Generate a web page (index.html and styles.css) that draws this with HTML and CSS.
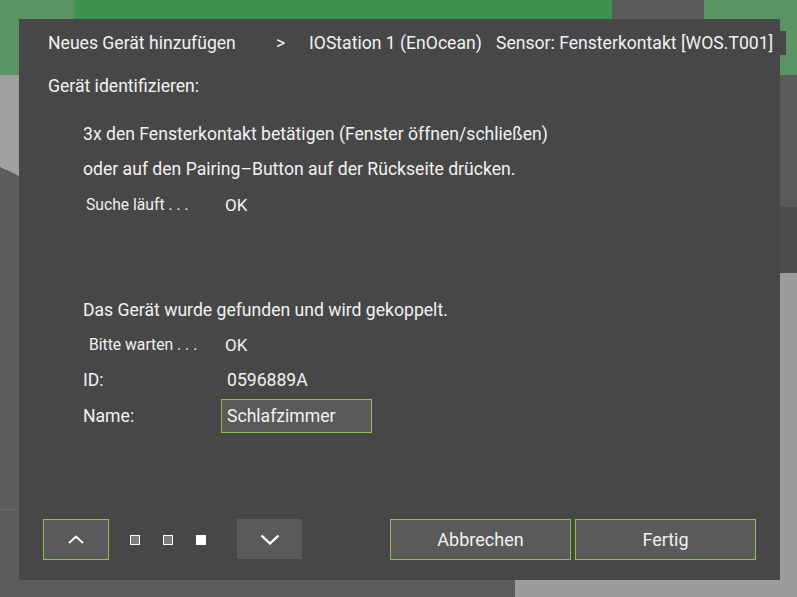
FILE: index.html
```html
<!DOCTYPE html>
<html lang="de">
<head>
<meta charset="utf-8">
<title>Neues Gerät hinzufügen</title>
<link rel="stylesheet" href="styles.css">
</head>
<body>
<div class="screen">
  <div class="dialog">
    <div class="crumbs">
      <span class="crumb crumb-first">Neues Gerät hinzufügen</span>
      <span class="crumb crumb-sep">&gt;</span>
      <span class="crumb crumb-mid">IOStation 1 (EnOcean)</span>
      <span class="crumb crumb-last">Sensor: Fensterkontakt [WOS.T001]</span>
    </div>
    <div class="title">Gerät identifizieren:</div>
    <div class="content">
      <div class="line">3x den Fensterkontakt betätigen (Fenster öffnen/schließen)</div>
      <div class="line">oder auf den Pairing–Button auf der Rückseite drücken.</div>
      <div class="row row-status">
        <span class="label small indent-a">Suche läuft . . .</span>
        <span class="value value-ok">OK</span>
      </div>
      <div class="line line-found">Das Gerät wurde gefunden und wird gekoppelt.</div>
      <div class="row row-status">
        <span class="label small indent-b">Bitte warten . . .</span>
        <span class="value value-ok">OK</span>
      </div>
      <div class="row">
        <span class="label">ID:</span>
        <span class="value value-id">0596889A</span>
      </div>
      <div class="row row-name">
        <span class="label">Name:</span>
        <span class="input">Schlafzimmer</span>
      </div>
    </div>
    <div class="footer">
      <button class="btn btn-nav btn-up" type="button" aria-label="Zurück">
        <svg width="16" height="9" viewBox="0 0 16 9"><polyline points="1,8 8,1.5 15,8" fill="none" stroke="#ffffff" stroke-width="2"/></svg>
      </button>
      <div class="dots">
        <span class="dot"></span>
        <span class="dot"></span>
        <span class="dot dot-active"></span>
      </div>
      <button class="btn btn-nav btn-down" type="button" aria-label="Weiter">
        <svg width="20" height="11" viewBox="0 0 20 11"><polyline points="1.5,1.5 10,9.5 18.5,1.5" fill="none" stroke="#ffffff" stroke-width="2.4"/></svg>
      </button>
      <div class="actions">
        <button class="btn btn-action" type="button">Abbrechen</button>
        <button class="btn btn-action" type="button">Fertig</button>
      </div>
    </div>
  </div>
</div>
</body>
</html>
```
FILE: styles.css
```css
html, body {
  margin: 0;
  padding: 0;
}

body {
  font-family: Roboto, "Liberation Sans", sans-serif;
  color: #f2f2f2;
}

.screen {
  width: 797px;
  height: 597px;
  box-sizing: border-box;
  padding: 19px 17px 17px 19px;
  display: flex;
  overflow: hidden;
  background:
    linear-gradient(#6b6b6b, #6b6b6b) 0 509px / 19px 1px no-repeat,
    linear-gradient(#5b9464, #5b9464) 0 0 / 75px 75px no-repeat,
    linear-gradient(205deg, #a0a0a0 91.4px, #5c5c5c 91.4px) 0 75px / 19px 120px no-repeat,
    linear-gradient(#3f9150, #3f9150) 75px 0 / 537px 75px no-repeat,
    linear-gradient(#5a5a5a, #5a5a5a) 612px 0 / 92px 75px no-repeat,
    linear-gradient(#5b9464, #5b9464) 704px 0 / 93px 75px no-repeat,
    linear-gradient(#5a5a5a, #5a5a5a) 704px 75px / 93px 132px no-repeat,
    linear-gradient(#4d4d4d, #4d4d4d) 704px 207px / 93px 66px no-repeat,
    linear-gradient(#9c9c9c, #9c9c9c) 515px 273px / 282px 324px no-repeat,
    #5c5c5c;
}

.dialog {
  flex: 1;
  min-width: 0;
  background: #474747;
  display: flex;
  flex-direction: column;
}

/* breadcrumb */
.crumbs {
  margin-top: 12px;
  height: 24px;
  padding-left: 29px;
  display: flex;
  align-items: center;
  font-size: 17.6px;
  line-height: 24px;
  white-space: nowrap;
}

.crumb { flex: none; }
.crumb-first { width: 228px; }
.crumb-sep { width: 33px; }
.crumb-mid { width: 179px; }
.crumb-last {
  width: 298px;
  box-sizing: border-box;
  padding-left: 8px;
  background: #474747;
}

.title {
  margin-top: 19px;
  height: 24px;
  line-height: 24px;
  padding-left: 29px;
  font-size: 17.6px;
}

/* content */
.content {
  margin-top: 19px;
  padding-left: 64px;
  display: flex;
  flex-direction: column;
}

.line {
  height: 35px;
  line-height: 35px;
  font-size: 17.6px;
  white-space: nowrap;
}

.line-found {
  margin-top: 71px;
  height: 34px;
  line-height: 34px;
}

.row {
  height: 35px;
  display: flex;
  align-items: center;
  font-size: 17.6px;
}

.label {
  width: 138px;
  flex: none;
  box-sizing: border-box;
  white-space: nowrap;
}

.small { font-size: 15.7px; }
.indent-a { padding-left: 3px; }
.indent-b { padding-left: 6px; }

.value-ok { padding-left: 4px; font-size: 17px; }
.value-id { padding-left: 6px; }

.row-name { height: 38px; }

.input {
  width: 151px;
  height: 34px;
  box-sizing: border-box;
  border: 1px solid #8fc14b;
  background: #5a5a5a;
  padding-left: 5px;
  line-height: 32px;
  font-size: 17.6px;
}

/* footer */
.footer {
  margin-top: auto;
  padding: 0 24px 20px 24px;
  display: flex;
  align-items: center;
}

.btn {
  font-family: inherit;
  color: #f2f2f2;
  margin: 0;
  padding: 0;
  cursor: pointer;
  display: flex;
  align-items: center;
  justify-content: center;
}

.btn-nav {
  width: 66px;
  height: 41px;
  background: #5a5a5a;
  border: none;
}

.btn-up {
  border: 1px solid #8fc14b;
}

.btn-up svg { margin-top: -1px; }

.btn-down {
  width: 65px;
  height: 40px;
  margin-top: -1px;
}

.btn-down svg { margin-top: 1px; }

.dots {
  display: flex;
  gap: 23px;
  margin-left: 21px;
  margin-right: 31px;
}

.dot {
  width: 10px;
  height: 10px;
  box-sizing: border-box;
  border: 1px solid #ffffff;
  background: #7e7e7e;
}

.dot-active {
  background: #ffffff;
}

.actions {
  margin-left: auto;
  display: flex;
  gap: 4px;
}

.btn-action {
  width: 181px;
  height: 41px;
  background: #5a5a5a;
  border: 1px solid #8fc14b;
  font-size: 18px;
}
```
